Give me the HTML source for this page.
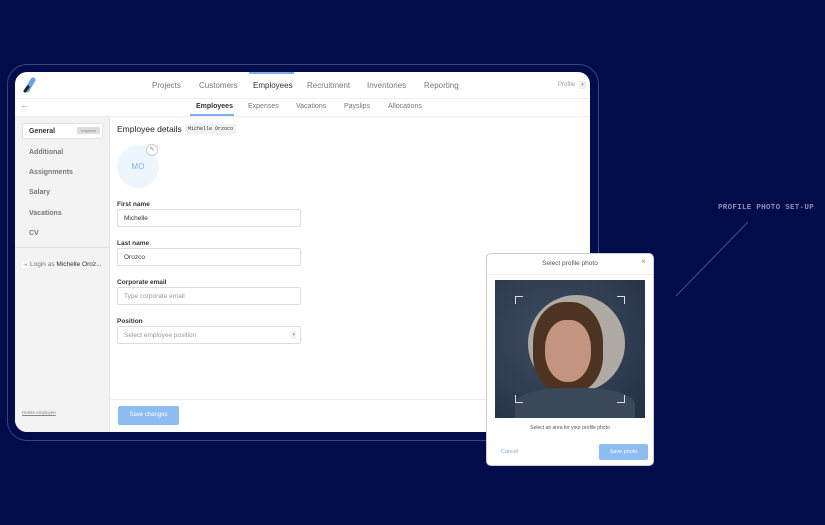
<!DOCTYPE html>
<html><head><style>
*{box-sizing:border-box;margin:0;padding:0}
body{width:825px;height:525px;background:#030c4b;font-family:"Liberation Sans",sans-serif;position:relative;overflow:hidden;color:#333}
.a{position:absolute}
.frame{left:7px;top:64px;width:592px;height:377px;border:1.5px solid #3a4378;border-radius:20px}
.screen{left:15px;top:72px;width:575px;height:360px;background:#fff;border-radius:12px 12px 0 12px;overflow:hidden}
.nav{font-size:8px;color:#777}
.side{left:0;top:45px;width:95px;height:315px;background:#f3f3f3;border-right:1px solid #e4e4e4}
.si{position:absolute;left:14px;font-size:7px;color:#777;font-weight:bold}
.lbl{font-size:6.5px;color:#333;font-weight:bold;position:absolute}
.in{position:absolute;left:102px;width:184px;height:18px;border:1px solid #ddd;border-radius:2px;font-size:6.5px;padding:5px 6px;color:#333}
.sub{position:absolute;top:31px;font-size:7px;color:#777}
</style></head><body>
<div class="a frame"></div>
<div class="a screen">
 <div class="a" style="left:0;top:26px;width:575px;height:1px;background:#eee"></div>
 <div class="a" style="left:0;top:44px;width:575px;height:1px;background:#eee"></div>
 <svg class="a" style="left:8px;top:5px" width="14" height="17" viewBox="0 0 14 17"><path d="M4 13 L10 3" stroke="#6aa0e8" stroke-width="5" stroke-linecap="round"/><path d="M2 14 L5 10" stroke="#222" stroke-width="3" stroke-linecap="round"/></svg>
 <div class="a nav" style="left:137px;top:9px">Projects</div>
 <div class="a nav" style="left:184px;top:9px">Customers</div>
 <div class="a nav" style="left:238px;top:9px;color:#333">Employees</div>
 <div class="a" style="left:234px;top:0;width:45px;height:2px;background:#7ab0ec"></div>
 <div class="a nav" style="left:292px;top:9px">Recruitment</div>
 <div class="a nav" style="left:352px;top:9px">Inventories</div>
 <div class="a nav" style="left:409px;top:9px">Reporting</div>
 <div class="a nav" style="left:543px;top:10px;font-size:6px;color:#999">Profile</div>
 <div class="a" style="left:564px;top:9px;width:7px;height:8px;background:#eee;font-size:5px;color:#999;text-align:center;line-height:8px">▾</div>
 <div class="a" style="left:5px;top:28px;font-size:9px;color:#888">←</div>
 <div class="sub" style="left:181px;color:#333;font-weight:bold">Employees</div>
 <div class="a" style="left:175px;top:42px;width:44px;height:2px;background:#7ab0ec"></div>
 <div class="sub" style="left:233px">Expenses</div>
 <div class="sub" style="left:281px">Vacations</div>
 <div class="sub" style="left:329px">Payslips</div>
 <div class="sub" style="left:373px">Allocations</div>
 <div class="a side">
  <div class="a" style="left:7px;top:6px;width:81px;height:16px;background:#fff;border:1px solid #e2e2e2;border-radius:2px"></div>
  <div class="si" style="top:11px;color:#333">General</div>
  <div class="a" style="left:62px;top:10px;width:23px;height:7px;background:#ddd;font-size:4px;color:#888;text-align:center;line-height:7px">required</div>
  <div class="si" style="top:32px">Additional</div>
  <div class="si" style="top:52px">Assignments</div>
  <div class="si" style="top:72px">Salary</div>
  <div class="si" style="top:93px">Vacations</div>
  <div class="si" style="top:113px">CV</div>
  <div class="a" style="left:0;top:130px;width:95px;height:1px;background:#e2e2e2"></div>
  <div class="si" style="left:7px;top:144px;font-size:6.5px;font-weight:normal"><span style="font-size:5px;color:#888;background:#fff;padding:0 1px">⇥</span> Login as <span style="color:#333">Michelle Oroz...</span></div>
  <div class="si" style="left:7px;top:293px;font-size:4.5px;color:#888;text-decoration:underline;font-weight:normal">Delete employee</div>
 </div>
 <div class="a" style="left:102px;top:52px;font-size:8.5px;color:#222">Employee details</div>
 <div class="a" style="left:170px;top:52px;background:#f1f1f1;font-family:'Liberation Mono',monospace;font-size:5px;padding:2px 3px;color:#333">Michelle Orzoco</div>
 <div class="a" style="left:102px;top:73px;width:42px;height:43px;border-radius:50%;background:#eef6fd;color:#7ab0ec;font-size:8px;text-align:center;line-height:43px">MO</div>
 <div class="a" style="left:131px;top:72px;width:12px;height:12px;border-radius:50%;background:#fff;border:1px solid #ccc;font-size:6px;color:#888;text-align:center;line-height:10px">✎</div>
 <div class="lbl" style="left:102px;top:129px">First name</div>
 <div class="in" style="top:137px">Michelle</div>
 <div class="lbl" style="left:102px;top:168px">Last name</div>
 <div class="in" style="top:176px">Orozco</div>
 <div class="lbl" style="left:102px;top:207px">Corporate email</div>
 <div class="in" style="top:215px;color:#999">Type corporate email</div>
 <div class="lbl" style="left:102px;top:246px">Position</div>
 <div class="in" style="top:254px;color:#999">Select employee position<span style="position:absolute;right:4px;top:4px;font-size:5px;background:#f2f2f2;padding:1px">▾</span></div>
 <div class="a" style="left:95px;top:327px;width:480px;height:1px;background:#eee"></div>
 <div class="a" style="left:103px;top:334px;width:61px;height:19px;background:#8cbcf0;border-radius:2px;color:#fff;font-size:6px;text-align:center;line-height:19px">Save changes</div>
</div>
<div class="a" style="left:718px;top:204px;font-family:'Liberation Mono',monospace;font-size:7.5px;color:#8a90b8;font-weight:bold;letter-spacing:0.3px">PROFILE PHOTO SET-UP</div>
<svg class="a" style="left:0;top:0" width="825" height="525"><line x1="748" y1="222" x2="676" y2="296" stroke="#5a6399" stroke-width="0.8"/></svg>
<div class="a" style="left:486px;top:253px;width:168px;height:213px;background:#fff;border-radius:5px;border:1px solid #ccc">
 <div class="a" style="left:0;width:166px;text-align:center;top:6px;font-size:6.5px;color:#555">Select profile photo</div>
 <div class="a" style="left:154px;top:3px;font-size:8px;color:#888">×</div>
 <div class="a" style="left:0;top:20px;width:166px;height:1px;background:#eee"></div>
 <div class="a" style="left:8px;top:26px;width:150px;height:138px;background:radial-gradient(ellipse at 40% 40%,#3e4c62,#243044);overflow:hidden">
  <div class="a" style="left:33px;top:15px;width:97px;height:97px;border-radius:50%;background:#b0aaa4"></div>
  <div class="a" style="left:38px;top:22px;width:70px;height:90px;border-radius:45% 45% 40% 40%;background:#4e3222"></div>
  <div class="a" style="left:50px;top:40px;width:46px;height:62px;border-radius:45% 45% 48% 48%;background:#c39480"></div>
  <div class="a" style="left:20px;top:108px;width:120px;height:40px;border-radius:40% 40% 0 0;background:#3a4859"></div>
  <div class="a" style="left:20px;top:16px;width:8px;height:8px;border-left:1px solid #ddd;border-top:1px solid #ddd"></div>
  <div class="a" style="left:122px;top:16px;width:8px;height:8px;border-right:1px solid #ddd;border-top:1px solid #ddd"></div>
  <div class="a" style="left:20px;top:115px;width:8px;height:8px;border-left:1px solid #ddd;border-bottom:1px solid #ddd"></div>
  <div class="a" style="left:122px;top:115px;width:8px;height:8px;border-right:1px solid #ddd;border-bottom:1px solid #ddd"></div>
 </div>
 <div class="a" style="left:0;top:171px;width:166px;text-align:center;font-size:5px;color:#555">Select an area for your profile photo</div>
 <div class="a" style="left:14px;top:195px;font-size:5.5px;color:#7ab0ec">Cancel</div>
 <div class="a" style="left:112px;top:190px;width:49px;height:16px;background:#8cbcf0;border-radius:2px;color:#fff;font-size:5.5px;text-align:center;line-height:16px">Save photo</div>
</div>
</body></html>
